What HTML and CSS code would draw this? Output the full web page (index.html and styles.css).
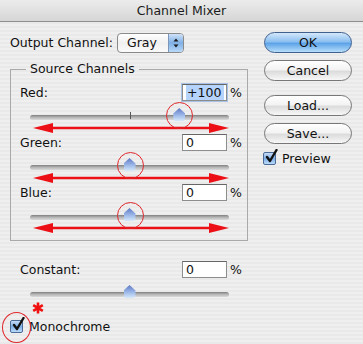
FILE: index.html
```html
<!doctype html>
<html lang="en">
  <head>
    <meta charset="UTF-8" />
    <title>Channel Mixer</title>
    <link rel="stylesheet" href="styles.css">
  </head>
  <body>
    <div class="dialog">
      <div class="titlebar">Channel Mixer</div>

      <div class="content">
        <!-- left side: channel controls -->
        <div class="main">
          <div class="output-row">
            <span class="output-label">Output Channel:</span>
            <div class="select">
              <span class="select-value">Gray</span>
              <span class="stepper">
                <svg width="8" height="12" viewBox="0 0 8 12"><path d="M4 1.5 L6.5 4.5 H1.5 Z M4 10.5 L6.5 7.5 H1.5 Z" fill="#1a1a1a"/></svg>
              </span>
            </div>
          </div>

          <fieldset class="group">
            <legend>Source Channels</legend>

            <div class="channel">
              <div class="field-row">
                <span class="field-label">Red:</span>
                <span class="num focused"><span class="selected">+100</span></span>
                <span class="pct">%</span>
              </div>
              <div class="slider">
                <div class="track"></div>
                <span class="tick"></span>
                <span class="thumb" style="left: 75%"></span>
                <span class="ring" style="left: 75%"></span>
              </div>
              <svg class="arrow" width="196" height="10" viewBox="0 0 196 10">
                <path d="M0 5 L20 0 V3.8 H176 V0 L196 5 L176 10 V6.2 H20 V10 Z" fill="#ec1016"/>
              </svg>
            </div>

            <div class="channel">
              <div class="field-row">
                <span class="field-label">Green:</span>
                <span class="num">0</span>
                <span class="pct">%</span>
              </div>
              <div class="slider">
                <div class="track"></div>
                <span class="thumb" style="left: 50%"></span>
                <span class="ring" style="left: 50%"></span>
              </div>
              <svg class="arrow" width="196" height="10" viewBox="0 0 196 10">
                <path d="M0 5 L20 0 V3.8 H176 V0 L196 5 L176 10 V6.2 H20 V10 Z" fill="#ec1016"/>
              </svg>
            </div>

            <div class="channel">
              <div class="field-row">
                <span class="field-label">Blue:</span>
                <span class="num">0</span>
                <span class="pct">%</span>
              </div>
              <div class="slider">
                <div class="track"></div>
                <span class="thumb" style="left: 50%"></span>
                <span class="ring" style="left: 50%"></span>
              </div>
              <svg class="arrow" width="196" height="10" viewBox="0 0 196 10">
                <path d="M0 5 L20 0 V3.8 H176 V0 L196 5 L176 10 V6.2 H20 V10 Z" fill="#ec1016"/>
              </svg>
            </div>
          </fieldset>

          <div class="channel constant">
            <div class="field-row">
              <span class="field-label">Constant:</span>
              <span class="num">0</span>
              <span class="pct">%</span>
            </div>
            <div class="slider">
              <div class="track"></div>
              <span class="thumb" style="left: 50%"></span>
            </div>
          </div>

          <div class="mono-row">
            <!-- red annotation mark -->
            <svg class="asterisk" width="12" height="12" viewBox="0 0 12 12">
              <path d="M6 0.5 V11.5 M1.2 3.2 L10.8 8.8 M1.2 8.8 L10.8 3.2" stroke="#f01010" stroke-width="2.6"/>
            </svg>
            <span class="mono-ring"></span>
            <span class="checkbox">
              <svg class="check" width="15" height="15" viewBox="0 0 15 15"><path d="M3 8 L6 12 L12.5 1" fill="none" stroke="#111" stroke-width="2.4" stroke-linecap="round" stroke-linejoin="round"/></svg>
            </span>
            <span>Monochrome</span>
          </div>
        </div>

        <!-- right side: buttons -->
        <div class="side">
          <button class="btn default">OK</button>
          <button class="btn">Cancel</button>
          <button class="btn spaced">Load...</button>
          <button class="btn">Save...</button>
          <div class="preview-row">
            <span class="checkbox">
              <svg class="check" width="15" height="15" viewBox="0 0 15 15"><path d="M3 8 L6 12 L12.5 1" fill="none" stroke="#111" stroke-width="2.4" stroke-linecap="round" stroke-linejoin="round"/></svg>
            </span>
            <span>Preview</span>
          </div>
        </div>
      </div>
    </div>
  </body>
</html>
```

FILE: styles.css
```css
body {
  margin: 0;
  font-family: "DejaVu Sans", "Noto Sans", sans-serif;
  font-size: 12.5px;
  color: #111;
  background: #ececec;
}

.dialog {
  width: 363px;
  height: 344px;
  overflow: hidden;
  background: repeating-linear-gradient(#efefef 0, #efefef 2px, #e9e9e9 2px, #e9e9e9 4px);
}

/* --- Title bar --- */
.titlebar {
  height: 21px;
  line-height: 21px;
  text-align: center;
  font-size: 12.5px;
  color: #1c1c1c;
  background: linear-gradient(#ececec, #d6d6d6);
  border-bottom: 1px solid #8e8e8e;
}

.content {
  display: flex;
  padding: 10px 0 0 10px;
}

.main {
  width: 238px;
}

/* --- Output channel --- */
.output-row {
  display: flex;
  align-items: center;
  height: 21px;
}
.output-label {
  width: 107px;
}
.select {
  display: flex;
  align-items: center;
  box-sizing: border-box;
  width: 67px;
  height: 20px;
  border: 1px solid #8a8a8a;
  border-radius: 4px;
  background: linear-gradient(#ffffff, #f0f0f0 50%, #fafafa);
  overflow: hidden;
}
.select-value {
  flex: 1;
  padding-left: 9px;
}
.stepper {
  display: flex;
  align-items: center;
  justify-content: center;
  width: 14px;
  height: 100%;
  border-left: 1px solid #7d95b8;
  background: linear-gradient(#cfe2f8, #7fb0e6 50%, #b8d8f8);
}

/* --- Source channels group --- */
.group {
  box-sizing: border-box;
  width: 238px;
  margin: 8px 0 0 0;
  padding: 7px 6px 6px 9px;
  border: 1px solid #a9a9a9;
}
.group legend {
  margin-left: 6px;
  padding: 0 4px;
  line-height: 16px;
}

.channel {
  height: 50px;
}
.field-row {
  display: flex;
  align-items: center;
  height: 17px;
}
.field-label {
  flex: 1;
}
.num {
  box-sizing: border-box;
  width: 45px;
  height: 17px;
  line-height: 15px;
  padding-left: 3px;
  background: #fff;
  border: 1px solid #8d8d8d;
  border-top-color: #666;
}
.num.focused {
  box-shadow: 0 0 0 1px #a8c2e6;
}
.selected {
  background: #b5d3fb;
  padding: 0 3px 0 1px;
}
.pct {
  width: 11px;
  margin-left: 3px;
}

/* --- Sliders --- */
.slider {
  position: relative;
  width: 199px;
  height: 14px;
  margin: 9px 0 0 10px;
}
.track {
  position: absolute;
  top: 5px;
  left: 0;
  right: 0;
  height: 5px;
  border-radius: 3px;
  background: linear-gradient(#7e7e7e, #b4b4b4 45%, #dadada);
}
.tick {
  position: absolute;
  left: 50%;
  top: 2px;
  width: 1px;
  height: 7px;
  background: #555;
}
.thumb {
  position: absolute;
  top: -2px;
  width: 12px;
  height: 13px;
  margin-left: -6px;
  background: linear-gradient(#5f78c4, #9cb8e8 55%, #d6e8fa);
  clip-path: polygon(50% 0, 100% 42%, 100% 82%, 88% 100%, 12% 100%, 0 82%, 0 42%);
}
.ring {
  position: absolute;
  top: -8px;
  width: 25px;
  height: 25px;
  margin-left: -13px;
  border: 1px solid #e0262b;
  border-radius: 50%;
}
.arrow {
  display: block;
  margin: -1px 0 0 13px;
}

/* --- Constant + monochrome --- */
.constant {
  height: 40px;
  margin-top: 20px;
  padding: 0 7px 0 10px;
}
.mono-row {
  position: relative;
  display: flex;
  align-items: center;
  height: 16px;
  margin-top: 17px;
}
.asterisk {
  position: absolute;
  left: 22px;
  top: -16px;
}
.mono-ring {
  position: absolute;
  left: -8px;
  top: -6px;
  width: 27px;
  height: 29px;
  border: 1px solid #e0262b;
  border-radius: 50%;
}

.checkbox {
  position: relative;
  box-sizing: border-box;
  width: 13px;
  height: 13px;
  margin-right: 6px;
  border: 1px solid #4c6b96;
  border-radius: 2px;
  background: linear-gradient(#c6dcf6, #7eaee6 50%, #bcdcfa);
}
.check {
  position: absolute;
  left: 0;
  top: -4px;
}

/* --- Buttons --- */
.side {
  display: flex;
  flex-direction: column;
  width: 88px;
  margin-left: 16px;
}
.btn {
  height: 21px;
  margin-bottom: 7px;
  padding: 0;
  font-family: inherit;
  font-size: 12.5px;
  color: #111;
  border: 1px solid #777;
  border-radius: 11px;
  background: linear-gradient(#ffffff, #f3f3f3 45%, #dcdcdc 55%, #f7f7f7);
}
.btn.default {
  border-color: #40608e;
  background: linear-gradient(#d4e7fb, #8dc0f0 45%, #5da3e8 55%, #b7defb);
}
.btn.spaced {
  margin-top: 7px;
}
.preview-row {
  display: flex;
  align-items: center;
  height: 14px;
  margin-left: -1px;
}
```
